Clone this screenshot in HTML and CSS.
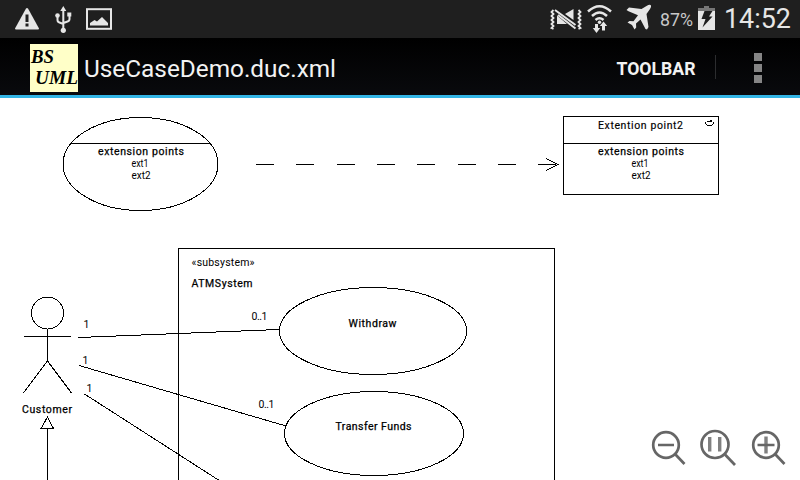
FILE: index.html
```html
<!DOCTYPE html>
<html lang="en">
<head>
<meta charset="utf-8">
<title>UseCaseDemo.duc.xml</title>
<link rel="stylesheet" href="styles.css">
</head>
<body>
<div class="screen">
  <header class="status">
    <svg class="status-left" viewBox="0 0 130 38" width="130" height="38">
      <path class="ink" d="M26 8.5Q27 7.500 28 8.500L39 28.500Q39 29.500 38 29.500H16Q15 29.500 15 28.500Z"/>
      <path class="hole" d="M25.500 14.500h3v7.500h-3zM25.500 23.500h3v3h-3z"/>
      <g class="stroke">
        <path d="M63.300 9V30M57.500 16v4q0 2 2 2.500l3.800 1.500M69.500 15v4q0 2-2 2.500l-4 1.500"/>
      </g>
      <path class="ink" d="M63.300 6l3 5h-6zM67.300 12.500h4v4h-4z"/>
      <circle class="ink" cx="57.500" cy="15.500" r="2.300"/><circle class="ink" cx="63.300" cy="30.300" r="2.600"/>
      <rect class="stroke" x="87" y="9.200" width="24" height="19.600"/>
      <path class="ink" d="M90 25.500V23l4.500-3 2.500 1.500 5-4.500 6 6v2.500z"/>
    </svg>
    <div class="status-right">
      <svg viewBox="545 0 115 38" width="115" height="38">
        <path class="buzz" d="M553.500 10l-2 2 2 2-2 2 2 2-2 2 2 2-2 2 2 2-2 2 2 1M578.500 10l2 2-2 2 2 2-2 2 2 2-2 2 2 2-2 2 2 2-2 1"/>
        <path class="ink" d="M565 14l8.500-5v11z"/>
        <path class="stroke" d="M555 10l20.500 15M558 15l17.500 13.500"/>
        <path class="ink" d="M557 15.500l10 8.500h-10z"/>
        <g class="wifi"><path d="M588 11.500Q599.500 1 611 11.500M592 16Q599.500 9 607 16M595.500 20Q599.500 16.500 603.500 20"/></g>
        <circle class="ink" cx="599.500" cy="22.300" r="1.700"/>
        <path class="ink" d="M595 24h3v4h2.200l-3.700 5-3.700-5H595zM603.500 21.500l3.700 4.500H605v4.500h-3V26h-2.200z"/>
        <path class="ink" d="M626.500 10l2.500-2.500 12.500 1.500 5-3Q650 4 651 5.500q.5 1-1 3.500l-3.500 5 2 13-1.500 2.500-1.500-.5-5-9.500-4.500 4 .2 4-1.700 2-2.500-4.500-4.500-2.500 2-1.500 4 .2 4.500-6-9.500-4z"/>
      </svg>
      <svg class="percent" viewBox="660 0 37 38" width="37" height="38"><text x="660" y="26" textLength="33" lengthAdjust="spacingAndGlyphs">87%</text></svg>
      <svg class="battery" viewBox="697 0 20 38" width="20" height="38">
        <path class="dim" d="M704 6h5v2h6v4h-17V8h6z"/>
        <path class="ink" d="M698 11h17v19h-17z"/>
        <path class="hole" d="M704.500 11h8l-3.500 5.500h3.500L702.500 27.500l3-8.500H701.500z"/>
      </svg>
      <svg class="clock" viewBox="717 0 83 38" width="83" height="38"><text x="724" y="28" textLength="67" lengthAdjust="spacingAndGlyphs">14:52</text></svg>
    </div>
  </header>
  <nav class="actionbar">
    <svg class="logo" viewBox="0 0 48 48" width="48" height="48">
      <rect width="48" height="48"/>
      <text x="1" y="19" textLength="23" lengthAdjust="spacingAndGlyphs">BS</text>
      <text x="5" y="40" textLength="43" lengthAdjust="spacingAndGlyphs">UML</text>
    </svg>
    <svg class="title" viewBox="82 38 260 57" width="260" height="57"><text x="84" y="77" textLength="252" lengthAdjust="spacingAndGlyphs">UseCaseDemo.duc.xml</text></svg>
    <svg class="toolbar" viewBox="610 38 90 57" width="90" height="57"><text x="616.500" y="75" textLength="79" lengthAdjust="spacingAndGlyphs">TOOLBAR</text></svg>
    <div class="divider"></div>
    <div class="more"><i></i><i></i><i></i></div>
  </nav>
  <main>
    <svg class="canvas" viewBox="0 98 800 382" width="800" height="382">
      <g class="shape">
        <ellipse cx="140.500" cy="164" rx="77.500" ry="46.500"/>
        <path d="M71 143.500H210"/>
        <path d="M256 164.500H558" stroke-dasharray="18 22.300"/>
        <path d="M546 158.500l12 6-12 6"/>
        <path d="M563.500 116.500h155v78h-155zM563 143.500h156"/>
        <path d="M707 121.500h5M705.500 122v2M706 124.500h1M707 125.500h5M712 124.500h1M713.500 122v2M710 120.500h2"/>
        <path d="M178.500 482V248.500H554.500V482"/>
        <ellipse cx="373" cy="331" rx="93.500" ry="43.500"/>
        <ellipse cx="374" cy="433.500" rx="89.500" ry="42"/>
        <circle cx="47.500" cy="313" r="16"/>
        <path d="M47.500 329v32M24 336.500H71M47.500 361L23.500 393M47.500 361L71.500 393"/>
        <path d="M47.500 482V428.500M47.500 417L41 428.500H53.500z"/>
        <path d="M78.500 337.500L279 329.500M79 365.500L286 426M84.500 394L220 481"/>
      </g>
      <g class="label">
        <text x="98" y="155" textLength="86" class="bold">extension points</text>
        <text x="131.500" y="167" textLength="17" lengthAdjust="spacingAndGlyphs">ext1</text>
        <text x="131.500" y="179" textLength="19" lengthAdjust="spacingAndGlyphs">ext2</text>
        <text x="598" y="129" textLength="85" class="mid">Extention point2</text>
        <text x="598" y="155" textLength="86" class="bold">extension points</text>
        <text x="631.500" y="167" textLength="17" lengthAdjust="spacingAndGlyphs">ext1</text>
        <text x="631.500" y="179" textLength="19" lengthAdjust="spacingAndGlyphs">ext2</text>
        <text x="191.500" y="266" textLength="63">«subsystem»</text>
        <text x="191.500" y="287" textLength="61" class="bold">ATMSystem</text>
        <text x="348.500" y="327" textLength="48" class="bold">Withdraw</text>
        <text x="335.500" y="430" textLength="76" class="bold">Transfer Funds</text>
        <text x="22" y="413" textLength="50" class="bold">Customer</text>
        <text x="83.500" y="328">1</text>
        <text x="82.500" y="364">1</text>
        <text x="86.500" y="392">1</text>
        <text x="251.500" y="320" textLength="16">0..1</text>
        <text x="258.500" y="408" textLength="16">0..1</text>
      </g>
      <g class="zoom">
        <circle cx="666" cy="445" r="12.800"/><path d="M675.500 454.500L684.500 464M658 445h16"/>
        <circle cx="715" cy="444.500" r="13.500"/><path d="M725 454.500L735 465"/><path class="bars" d="M709.700 437v14.500M719.700 437v14.500"/>
        <circle cx="766" cy="445" r="12.800"/><path class="bars" d="M766 436.500v17"/><path d="M775.500 454.500L784.500 464M757.500 445h17"/>
      </g>
    </svg>
  </main>
</div>
</body>
</html>
```
FILE: styles.css
```css
body { margin: 0; background: #fff; font-family: Roboto, sans-serif; }
.screen { width: 800px; height: 480px; overflow: hidden; display: flex; flex-direction: column; }
svg { display: block; flex: none; }
.status { height: 38px; background: #1f1f1f; display: flex; justify-content: space-between; color: #e6e6e6; }
.status-right { display: flex; align-items: center; width: 255px; }
.ink { fill: #e6e6e6; }
.dim { fill: #777; }
.hole { fill: #1f1f1f; }
.stroke { fill: none; stroke: #e6e6e6; stroke-width: 2; }
.buzz { fill: none; stroke: #e6e6e6; stroke-width: 1.8; }
.wifi { fill: none; stroke: #e6e6e6; stroke-width: 2.5; }
.percent text { font-size: 18px; fill: #c8c8c8; }
.clock text { font-size: 27px; fill: #e6e6e6; }
.actionbar { height: 57px; background: linear-gradient(#000, #090a0d); border-bottom: 3px solid #33b5e5; display: flex; align-items: center; padding-left: 30px; }
.logo { margin-right: 4px; margin-top: 3px; }
.logo text { font: italic bold 19px "Liberation Serif", serif; }
.logo rect { fill: #ffffc8; }
.title text { font-size: 24px; fill: #f2f2f2; }
.toolbar { margin-left: 268px; }
.toolbar text { font-size: 18px; font-weight: 700; fill: #f2f2f2; }
.divider { width: 1px; height: 24px; background: #2c2d2f; margin-left: 15px; }
.more { display: flex; flex-direction: column; gap: 3px; margin-left: 38px; margin-top: 2px; }
.more i { width: 8px; height: 8px; background: #858585; }
.shape { fill: none; stroke: #000; stroke-width: 1; shape-rendering: crispEdges; }
.label text { font-size: 10.500px; fill: #000; }
.label .mid { stroke: #000; stroke-width: 0.15px; }
.label .bold { stroke: #000; stroke-width: 0.25px; }
.zoom { fill: none; stroke: #666; stroke-width: 2.7; }
.zoom .bars { stroke: #808080; stroke-width: 3.4; }
```
